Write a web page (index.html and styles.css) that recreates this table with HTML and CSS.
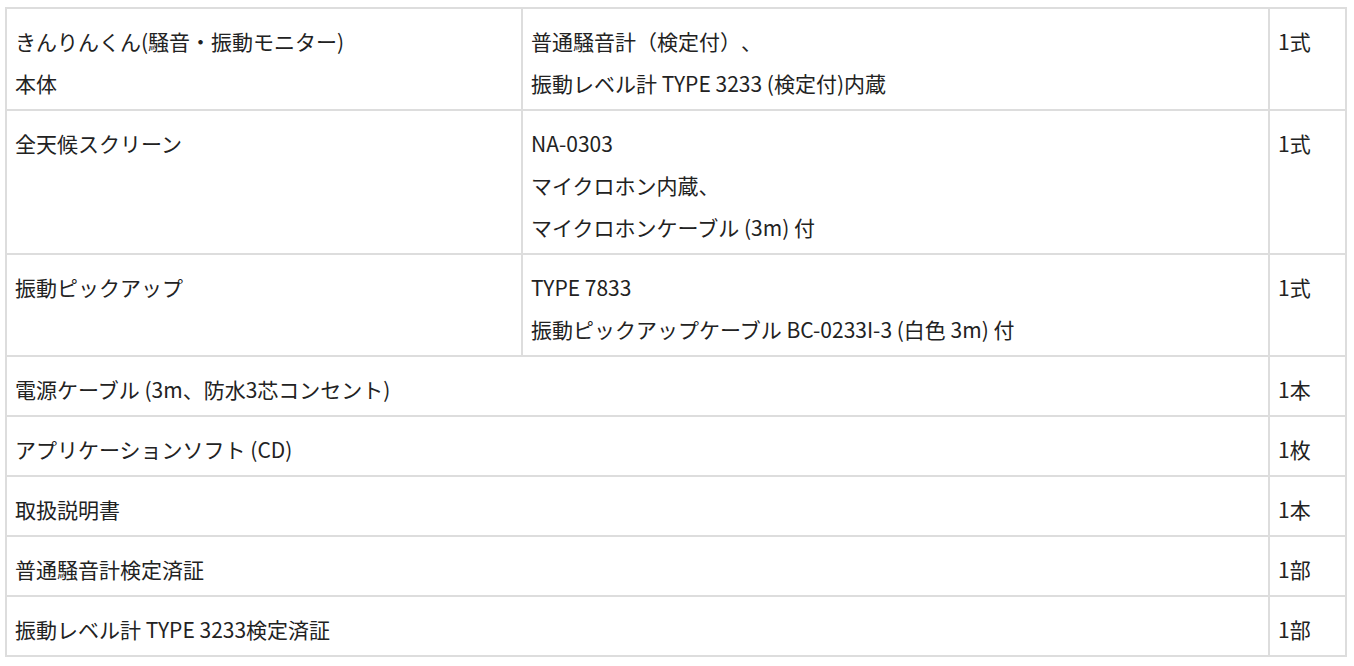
FILE: index.html
```html
<!DOCTYPE html>
<html lang="ja">
<head>
<meta charset="utf-8">
<title>付属品</title>
<link rel="stylesheet" href="styles.css">
</head>
<body>
<div class="page">
<table class="spec">
<colgroup>
<col class="c-name">
<col class="c-desc">
<col class="c-qty">
</colgroup>
<tbody>
<tr>
<td>きんりんくん(騒音・振動モニター)<br>本体</td>
<td>普通騒音計（検定付）、<br>振動レベル計 TYPE 3233 (検定付)内蔵</td>
<td>1式</td>
</tr>
<tr>
<td>全天候スクリーン</td>
<td>NA-0303<br>マイクロホン内蔵、<br>マイクロホンケーブル (3m) 付</td>
<td>1式</td>
</tr>
<tr>
<td>振動ピックアップ</td>
<td>TYPE 7833<br>振動ピックアップケーブル BC-0233I-3 (白色 3m) 付</td>
<td>1式</td>
</tr>
<tr>
<td colspan="2">電源ケーブル (3m、防水3芯コンセント)</td>
<td>1本</td>
</tr>
<tr>
<td colspan="2">アプリケーションソフト (CD)</td>
<td>1枚</td>
</tr>
<tr>
<td colspan="2">取扱説明書</td>
<td>1本</td>
</tr>
<tr>
<td colspan="2">普通騒音計検定済証</td>
<td>1部</td>
</tr>
<tr>
<td colspan="2">振動レベル計 TYPE 3233検定済証</td>
<td>1部</td>
</tr>
</tbody>
</table>
</div>
</body>
</html>
```
FILE: styles.css
```css
html, body {
  margin: 0;
  padding: 0;
  background: #ffffff;
}
.page {
  padding: 7px 9px 0 5px;
  font-family: "Noto Sans CJK JP", "Noto Sans", sans-serif;
  font-size: 21px;
  color: #222222;
  text-spacing-trim: space-all;
}
.spec {
  width: 1340px;
  border-collapse: collapse;
  table-layout: fixed;
}
.c-name { width: 516px; }
.c-desc { width: 747px; }
.c-qty { width: 77px; }
.spec td {
  border: 2px solid #dddddd;
  padding: 11px 8px 5px;
  line-height: 42px;
  vertical-align: top;
  text-align: left;
}
```
